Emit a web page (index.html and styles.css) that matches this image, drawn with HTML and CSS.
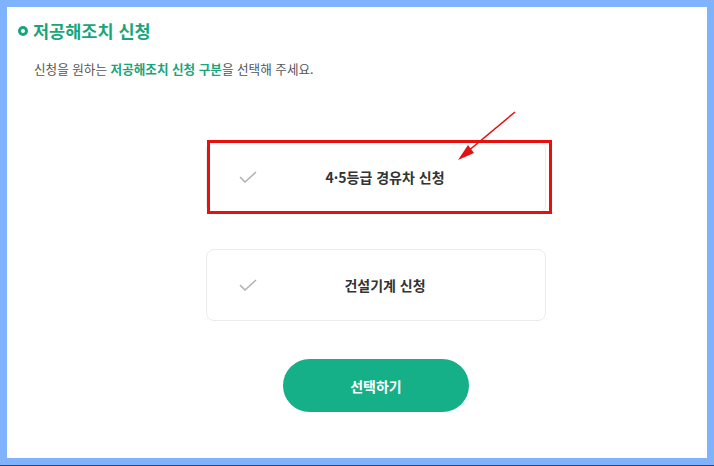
FILE: index.html
```html
<!DOCTYPE html>
<html lang="ko">
<head>
<meta charset="utf-8">
<title>저공해조치 신청</title>
<link rel="stylesheet" href="styles.css">
</head>
<body>
<div class="panel">
  <h1 class="title"><span class="ring"></span>저공해조치 신청</h1>
  <p class="desc">신청을 원하는 <strong>저공해조치 신청 구분</strong>을 선택해 주세요.</p>
  <div class="choices">
    <div class="card">
      <svg class="check" width="18" height="12" viewBox="0 0 18 12"><polyline points="1,6 6,11 17,1" fill="none" stroke="#b0b0b0" stroke-width="1.5"/></svg>
      <span class="label">4·5등급 경유차 신청</span>
    </div>
    <div class="card">
      <svg class="check" width="18" height="12" viewBox="0 0 18 12"><polyline points="1,6 6,11 17,1" fill="none" stroke="#b0b0b0" stroke-width="1.5"/></svg>
      <span class="label">건설기계 신청</span>
    </div>
    <button class="submit">선택하기</button>
  </div>
  <div class="highlight"></div>
  <svg class="arrow" width="70" height="60" viewBox="0 0 70 60">
    <line x1="58" y1="3" x2="10" y2="43" stroke="#e31212" stroke-width="1.6"/>
    <polygon points="1,51 11,36 17,44" fill="#e31212"/>
  </svg>
</div>
</body>
</html>
```
FILE: styles.css
```css
html, body {
  margin: 0;
  padding: 0;
}
body {
  width: 714px;
  height: 465px;
  background: #80b3fe;
  border-bottom: 1px solid #2c4860;
  font-family: "Noto Sans CJK KR", "Noto Sans", sans-serif;
  overflow: hidden;
}
.panel {
  position: relative;
  margin: 7px 7px 0;
  height: 451px;
  background: #fff;
  display: flex;
  flex-direction: column;
}
.title {
  margin: 12px 0 0 11px;
  display: flex;
  align-items: center;
  gap: 5px;
  font-size: 17.5px;
  line-height: 24px;
  font-weight: 700;
  color: #18a57c;
}
.ring {
  width: 4px;
  height: 4px;
  border: 3px solid #18a57c;
  border-radius: 50%;
}
.desc {
  margin: 18px 0 0 27px;
  font-size: 12.6px;
  line-height: 16px;
  color: #555;
}
.desc strong {
  color: #18a57c;
  font-weight: 700;
}
.choices {
  margin: 64px 0 0 199px;
  width: 340px;
  display: flex;
  flex-direction: column;
  align-items: center;
}
.card {
  box-sizing: border-box;
  width: 340px;
  height: 72px;
  border: 1px solid #ececec;
  border-radius: 8px;
  display: flex;
  align-items: center;
  padding: 0 32px;
  margin-bottom: 36px;
}
.card:nth-child(2) {
  margin-bottom: 38px;
}
.check {
  flex: none;
}
.label {
  flex: 1;
  text-align: center;
  font-size: 14px;
  font-weight: 700;
  color: #333;
}
.submit {
  width: 186px;
  height: 53px;
  border: 0;
  border-radius: 27px;
  background: #15b088;
  color: #fff;
  font-family: inherit;
  font-size: 14px;
  font-weight: 700;
  padding: 0;
}
.highlight {
  position: absolute;
  left: 200px;
  top: 133px;
  width: 339px;
  height: 68px;
  border: 3px solid #e80f0f;
}
.arrow {
  position: absolute;
  left: 450px;
  top: 102px;
}
```
